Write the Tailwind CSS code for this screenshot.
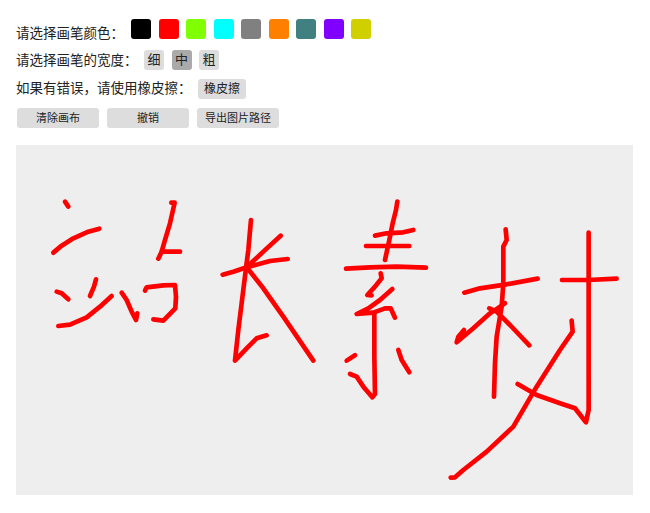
<!DOCTYPE html>
<html lang="zh">
<head>
    <meta charset="UTF-8">
    <title>画板</title>
    <script src="https://cdn.jsdelivr.net/npm/@tailwindcss/browser@4"></script>
</head>
<body class="bg-white text-[#222] font-['Liberation_Sans','Noto_Sans_CJK_SC',sans-serif] text-[13.5px] leading-5 w-[650px] h-[513px] overflow-hidden">
    <main class="pl-4 pt-[19px]">
        <!-- 画笔颜色 -->
        <div class="flex items-center h-5 mb-[11px]">
            <span class="w-[115px] pt-[9px] whitespace-nowrap">请选择画笔颜色：</span>
            <div class="flex gap-[7.5px]">
                <span class="w-[20px] h-5 rounded-[3px] bg-black"></span>
                <span class="w-[20px] h-5 rounded-[3px] bg-[#ff0000]"></span>
                <span class="w-[20px] h-5 rounded-[3px] bg-[#80ff00]"></span>
                <span class="w-[20px] h-5 rounded-[3px] bg-[#00ffff]"></span>
                <span class="w-[20px] h-5 rounded-[3px] bg-[#808080]"></span>
                <span class="w-[20px] h-5 rounded-[3px] bg-[#ff8000]"></span>
                <span class="w-[20px] h-5 rounded-[3px] bg-[#408080]"></span>
                <span class="w-[20px] h-5 rounded-[3px] bg-[#8000ff]"></span>
                <span class="w-[20px] h-5 rounded-[3px] bg-[#d0d000]"></span>
            </div>
        </div>
        <!-- 画笔宽度 -->
        <div class="flex items-center h-5 mb-[9px]">
            <span class="w-[128px] pt-[2px] whitespace-nowrap">请选择画笔的宽度：</span>
            <div class="flex gap-[7.5px] text-[13px]">
                <button class="w-[20px] h-5 rounded-[3px] bg-[#dddddd]">细</button>
                <button class="w-[20px] h-5 rounded-[3px] bg-[#aaaaaa]">中</button>
                <button class="w-[20px] h-5 rounded-[3px] bg-[#dddddd]">粗</button>
            </div>
        </div>
        <!-- 橡皮擦 -->
        <div class="flex items-center h-5 mb-[9px]">
            <span class="w-[182px] whitespace-nowrap">如果有错误，请使用橡皮擦：</span>
            <button class="w-[48px] h-5 rounded-[3px] bg-[#dddddd] text-xs">橡皮擦</button>
        </div>
        <div class="flex gap-2 h-5 pl-px mb-[17px] text-[11px]">
            <button class="w-[82px] h-5 rounded-[3px] bg-[#dddddd]">清除画布</button>
            <button class="w-[82px] h-5 rounded-[3px] bg-[#dddddd]">撤销</button>
            <button class="w-[82px] h-5 rounded-[3px] bg-[#dddddd]">导出图片路径</button>
        </div>
        <!-- 画布 -->
        <svg class="block w-[617px] h-[350px] bg-[#eeeeee]" viewBox="16 145 617 350" fill="none" stroke="#ff0000" stroke-linecap="round" stroke-linejoin="round">
            <g transform="translate(30 180) scale(0.3333)" stroke-width="14">
                <polyline points="105,65 115,80"/>
                <polyline points="70,218 95,197 130,175 175,155 208,146"/>
                <polyline points="424,68 434,68 420,130 405,180 395,215 385,236"/>
                <polyline points="395,215 450,215"/>
                <polyline points="80,335 95,340 115,358"/>
                <polyline points="198,298 192,320 180,348"/>
                <polyline points="85,438 120,434 170,412 210,380 245,348"/>
                <polyline points="275,338 290,360 305,395 318,420 322,400"/>
                <polyline points="345,332 350,322 400,316 435,315 438,350 436,385 400,422 370,418"/>
                <polyline points="663,120 655,210 648,265 635,370 625,450 615,542 650,505 680,475 710,466"/>
                <polyline points="752,167 700,215 650,262"/>
                <polyline points="578,284 610,275 650,262 720,243 773,237"/>
                <polyline points="650,262 700,325 760,410 850,542"/>
            </g>
            <g transform="translate(330 190) scale(0.3333)" stroke-width="14">
                <polyline points="202,35 198,60 188,100 178,150 165,210"/>
                <polyline points="135,137 170,130 220,127 250,120"/>
                <polyline points="108,168 238,168"/>
                <polyline points="48,236 120,232 200,230 288,233"/>
                <polyline points="152,250 155,265 135,290 112,315 125,316"/>
                <polyline points="187,297 150,330 115,355 80,372 130,368 165,355 182,355 195,383"/>
                <polyline points="133,370 133,500 135,612 127,622 100,590 80,560 60,552"/>
                <polyline points="75,496 50,512"/>
                <polyline points="205,480 215,510 238,547"/>
                <polyline points="527,118 530,150 520,170 520,280 515,350 500,440 495,520 492,620"/>
                <polyline points="403,308 450,295 530,283 623,266"/>
                <polyline points="525,340 480,370 430,415 380,457 385,440 402,420"/>
                <polyline points="478,355 500,365 540,405 598,466"/>
                <polyline points="696,270 775,270 860,266"/>
                <polyline points="776,128 776,660 768,697 735,655 690,640 620,615 563,582"/>
                <polyline points="725,392 728,425 690,480 620,590 550,710 470,785 400,840 375,862 362,863"/>
            </g>
        </svg>
    </main>
</body>
</html>
